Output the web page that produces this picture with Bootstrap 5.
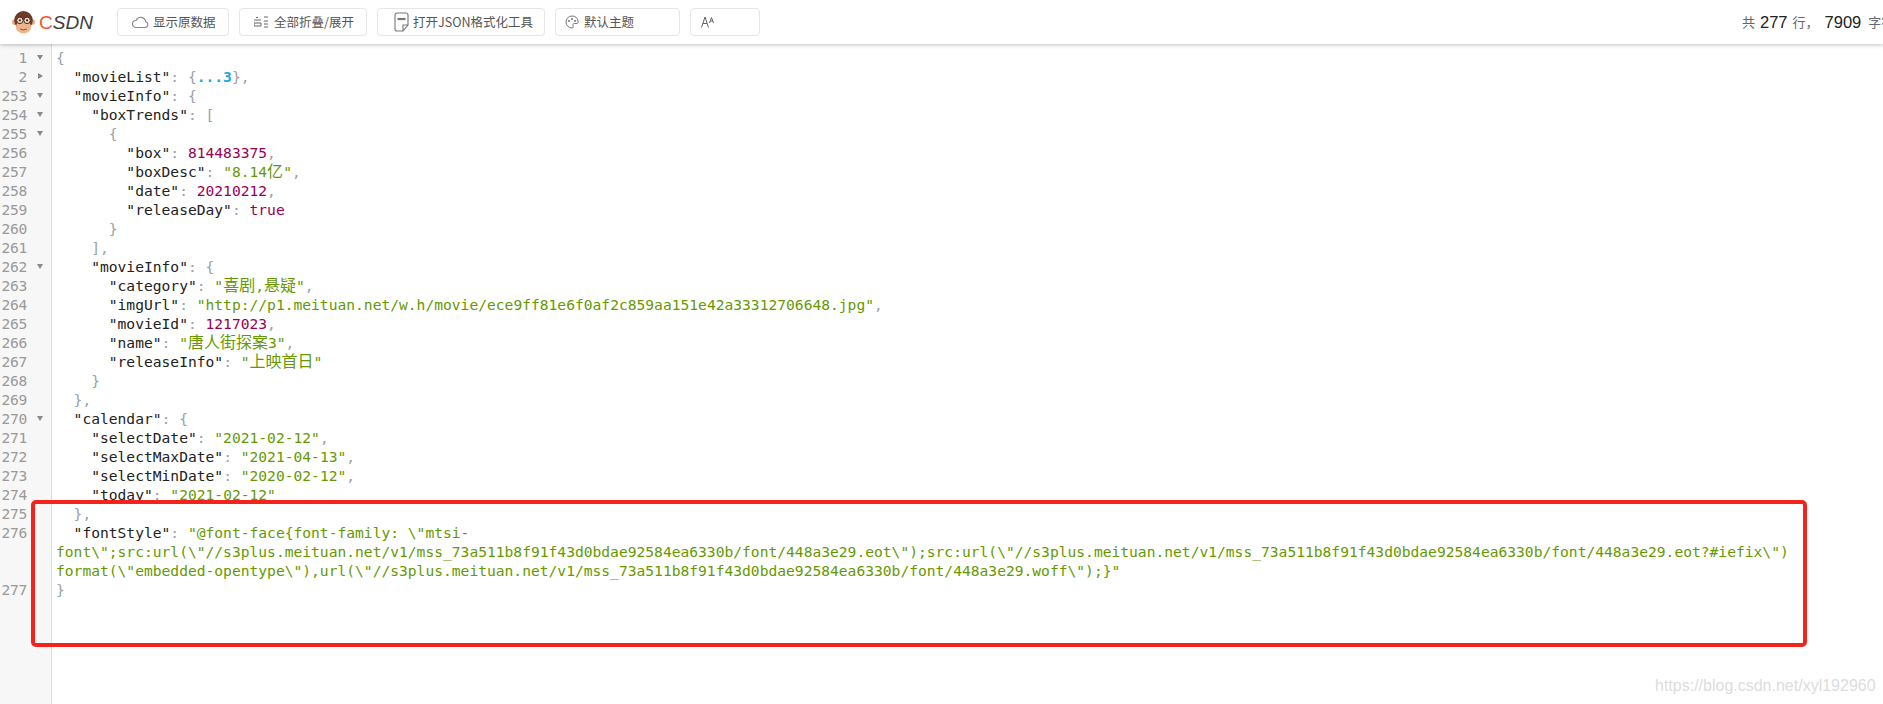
<!DOCTYPE html>
<html lang="zh">
<head>
<meta charset="utf-8">
<title>JSON</title>
<link href="https://cdn.jsdelivr.net/npm/bootstrap@5.3.0/dist/css/bootstrap.min.css" rel="stylesheet">
<style>
html,body{height:100%;overflow:hidden;background:#fff}
body{font-family:"Noto Sans CJK SC","Noto Sans",sans-serif;position:relative}
.topbar{height:44px;box-shadow:0 1px 4px rgba(0,0,0,.25);position:relative;z-index:2;background:#fff;padding-left:11px;white-space:nowrap}
.brandmark{width:106px;flex:none;gap:3px}
.brandtext{font:italic 400 19px/1 "Liberation Sans",sans-serif;color:#3d3d3d;letter-spacing:0}
.brandtext b{font-weight:400;color:#f1582f;font-style:normal}
.toolbtn{height:28px;font-size:12.5px;line-height:26px;color:#555;border:1px solid #e4e6ea;border-radius:4px;padding:0 0 0 14px;background:#fff;gap:4px;flex:none;margin-right:10px;justify-content:flex-start}
.w1{width:112px}.w2{width:128px;gap:6px}.w3{width:168px;padding-left:16px}.w4{width:125px;padding-left:9px;gap:5px}.w5{width:70px;padding-left:10px;margin-right:0}
.stats{position:absolute;left:1742px;top:0;height:44px;font-size:13px;color:#666;gap:5px;width:200px}
.stats strong{font:400 16.500px "Liberation Sans",sans-serif;color:#222}
.stats .second{margin-left:1px;margin-right:2px}
.sheet{position:absolute;inset:44px 0 0 0;padding-top:4px;font:14.62px/19px "DejaVu Sans Mono","Noto Sans CJK SC",monospace;color:#222}
.sheet::before{content:"";position:absolute;left:0;top:0;bottom:0;width:52px;background:#f7f7f7;border-right:1px solid #ddd}
.rowline{position:relative;min-height:19px}
.gut{width:52px;flex:none;padding-right:25px;text-align:right;color:#999;position:relative;letter-spacing:-.3px}
.gut.open::after,.gut.shut::after{content:"";position:absolute;left:37px;top:7px}
.gut.open::after{border:3.5px solid transparent;border-top:5px solid #888;border-bottom:0}
.gut.shut::after{left:38px;top:6px;border:3.5px solid transparent;border-left:5px solid #888;border-right:0}
.src{padding-left:4px;white-space:pre}
.p{color:#98a0aa}.s{color:#690}.n{color:#905}.m{color:#1ea7e6;font-weight:700}
.hz{font-size:16px;line-height:1}
.redbox{position:absolute;left:31px;top:500px;width:1776px;height:147px;border:4px solid #f4231c;border-radius:5px;z-index:3}
.wmark{position:absolute;left:1655px;top:673px;font:16px/26px "Liberation Sans",sans-serif;color:rgba(190,190,190,.55);z-index:3;white-space:nowrap}
</style>
</head>
<body>
<div class="topbar d-flex align-items-center">
  <div class="brandmark d-flex align-items-center">
    <svg width="25" height="24" viewBox="0 0 21 22"><circle cx="2.6" cy="11" r="2.6" fill="#e9a77c"/><circle cx="18.4" cy="11" r="2.6" fill="#e9a77c"/><circle cx="10.5" cy="9.5" r="8.5" fill="#6e3b2a"/><ellipse cx="10.500" cy="15.5" rx="7" ry="6" fill="#efb48b"/><circle cx="7.2" cy="9.5" r="3" fill="#f3d3b6" stroke="#3c2a22" stroke-width=".9"/><circle cx="13.8" cy="9.5" r="3" fill="#f3d3b6" stroke="#3c2a22" stroke-width=".9"/><circle cx="7.2" cy="9.5" r="1" fill="#3c2a22"/><circle cx="13.8" cy="9.5" r="1" fill="#3c2a22"/><path d="M7.5 17.5q3 1.5 6 0" fill="none" stroke="#8a4d34" stroke-width=".9"/></svg>
    <span class="brandtext"><b>C</b>SDN</span>
  </div>
  <button type="button" class="btn toolbtn w1 d-flex align-items-center"><svg width="17" height="14" viewBox="0 0 17 14"><path d="M4 12.5h9a3 3 0 0 0 .6-5.9A5 5 0 0 0 4 5.5a3.5 3.5 0 0 0 0 7z" fill="none" stroke="#888" stroke-width="1.1"/></svg>显示原数据</button>
  <button type="button" class="btn toolbtn w2 d-flex align-items-center"><svg width="14" height="14" viewBox="0 0 14 14"><path d="M2 2.500h2M0 5h7M0 8h7v3H0zM10 2h4M10 6h4M10 9h4M10 12h4" fill="none" stroke="#666"/></svg>全部折叠/展开</button>
  <button type="button" class="btn toolbtn w3 d-flex align-items-center"><svg width="15" height="20" viewBox="0 0 15 20"><path d="M3 1h9a2 2 0 0 1 2 2v10l-5 6H3a2 2 0 0 1-2-2V3a2 2 0 0 1 2-2zM14 13H9v6" fill="none" stroke="#777" stroke-width="1.1"/><path d="M3.5 7h8" stroke="#777" stroke-width="2.2"/></svg>打开JSON格式化工具</button>
  <button type="button" class="btn toolbtn w4 d-flex align-items-center"><svg width="14" height="14" viewBox="0 0 14 14"><path d="M7 1a6 6 0 1 0 0 12c1.500 0 1.500-1.500 1-2.500s0-2 1.500-2H12c1 0 1.300-1 1-2.500A6 6 0 0 0 7 1z" fill="none" stroke="#777"/><circle cx="4" cy="6" r="1" fill="#777"/><circle cx="7" cy="4" r="1" fill="#777"/><circle cx="10" cy="6" r="1" fill="#777"/></svg><span>默认主题</span></button>
  <button type="button" class="btn toolbtn w5 d-flex align-items-center"><svg width="14" height="12" viewBox="0 0 14 12"><path d="M.5 11.500L4 1l3.500 10.500M2 7.500h4M8.500 7L10.500 1.500 12.500 7M9.300 5h2.500" fill="none" stroke="#666"/></svg></button>
  <div class="stats d-flex align-items-center"><span>共</span><strong>277</strong><span>行，</span><strong class="second">7909</strong><span>字符</span></div>
</div>
<div class="sheet">
<div class="rowline d-flex"><div class="gut open">1</div><div class="src"><span class="p">{</span></div></div>
<div class="rowline d-flex"><div class="gut shut">2</div><div class="src">  "movieList"<span class="p">: {</span><span class="m">...3</span><span class="p">},</span></div></div>
<div class="rowline d-flex"><div class="gut open">253</div><div class="src">  "movieInfo"<span class="p">: {</span></div></div>
<div class="rowline d-flex"><div class="gut open">254</div><div class="src">    "boxTrends"<span class="p">: [</span></div></div>
<div class="rowline d-flex"><div class="gut open">255</div><div class="src">      <span class="p">{</span></div></div>
<div class="rowline d-flex"><div class="gut">256</div><div class="src">        "box"<span class="p">: </span><span class="n">814483375</span><span class="p">,</span></div></div>
<div class="rowline d-flex"><div class="gut">257</div><div class="src">        "boxDesc"<span class="p">: </span><span class="s">"8.14<span class="hz">亿</span>"</span><span class="p">,</span></div></div>
<div class="rowline d-flex"><div class="gut">258</div><div class="src">        "date"<span class="p">: </span><span class="n">20210212</span><span class="p">,</span></div></div>
<div class="rowline d-flex"><div class="gut">259</div><div class="src">        "releaseDay"<span class="p">: </span><span class="n">true</span></div></div>
<div class="rowline d-flex"><div class="gut">260</div><div class="src">      <span class="p">}</span></div></div>
<div class="rowline d-flex"><div class="gut">261</div><div class="src">    <span class="p">],</span></div></div>
<div class="rowline d-flex"><div class="gut open">262</div><div class="src">    "movieInfo"<span class="p">: {</span></div></div>
<div class="rowline d-flex"><div class="gut">263</div><div class="src">      "category"<span class="p">: </span><span class="s">"<span class="hz">喜剧</span>,<span class="hz">悬疑</span>"</span><span class="p">,</span></div></div>
<div class="rowline d-flex"><div class="gut">264</div><div class="src">      "imgUrl"<span class="p">: </span><span class="s">"http://p1.meituan.net/w.h/movie/ece9ff81e6f0af2c859aa151e42a33312706648.jpg"</span><span class="p">,</span></div></div>
<div class="rowline d-flex"><div class="gut">265</div><div class="src">      "movieId"<span class="p">: </span><span class="n">1217023</span><span class="p">,</span></div></div>
<div class="rowline d-flex"><div class="gut">266</div><div class="src">      "name"<span class="p">: </span><span class="s">"<span class="hz">唐人街探案</span>3"</span><span class="p">,</span></div></div>
<div class="rowline d-flex"><div class="gut">267</div><div class="src">      "releaseInfo"<span class="p">: </span><span class="s">"<span class="hz">上映首日</span>"</span></div></div>
<div class="rowline d-flex"><div class="gut">268</div><div class="src">    <span class="p">}</span></div></div>
<div class="rowline d-flex"><div class="gut">269</div><div class="src">  <span class="p">},</span></div></div>
<div class="rowline d-flex"><div class="gut open">270</div><div class="src">  "calendar"<span class="p">: {</span></div></div>
<div class="rowline d-flex"><div class="gut">271</div><div class="src">    "selectDate"<span class="p">: </span><span class="s">"2021-02-12"</span><span class="p">,</span></div></div>
<div class="rowline d-flex"><div class="gut">272</div><div class="src">    "selectMaxDate"<span class="p">: </span><span class="s">"2021-04-13"</span><span class="p">,</span></div></div>
<div class="rowline d-flex"><div class="gut">273</div><div class="src">    "selectMinDate"<span class="p">: </span><span class="s">"2020-02-12"</span><span class="p">,</span></div></div>
<div class="rowline d-flex"><div class="gut">274</div><div class="src">    "today"<span class="p">: </span><span class="s">"2021-02-12"</span></div></div>
<div class="rowline d-flex"><div class="gut">275</div><div class="src">  <span class="p">},</span></div></div>
<div class="rowline d-flex"><div class="gut">276</div><div class="src">  "fontStyle"<span class="p">: </span><span class="s">"@font-face{font-family: \"mtsi-
font\";src:url(\"//s3plus.meituan.net/v1/mss_73a511b8f91f43d0bdae92584ea6330b/font/448a3e29.eot\");src:url(\"//s3plus.meituan.net/v1/mss_73a511b8f91f43d0bdae92584ea6330b/font/448a3e29.eot?#iefix\")
format(\"embedded-opentype\"),url(\"//s3plus.meituan.net/v1/mss_73a511b8f91f43d0bdae92584ea6330b/font/448a3e29.woff\");}"</span></div></div>
<div class="rowline d-flex"><div class="gut">277</div><div class="src"><span class="p">}</span></div></div>
</div>
<div class="redbox"></div>
<div class="wmark">https://blog.csdn.net/xyl192960</div>
<script src="https://cdn.jsdelivr.net/npm/bootstrap@5.3.0/dist/js/bootstrap.bundle.min.js"></script>
</body>
</html>
